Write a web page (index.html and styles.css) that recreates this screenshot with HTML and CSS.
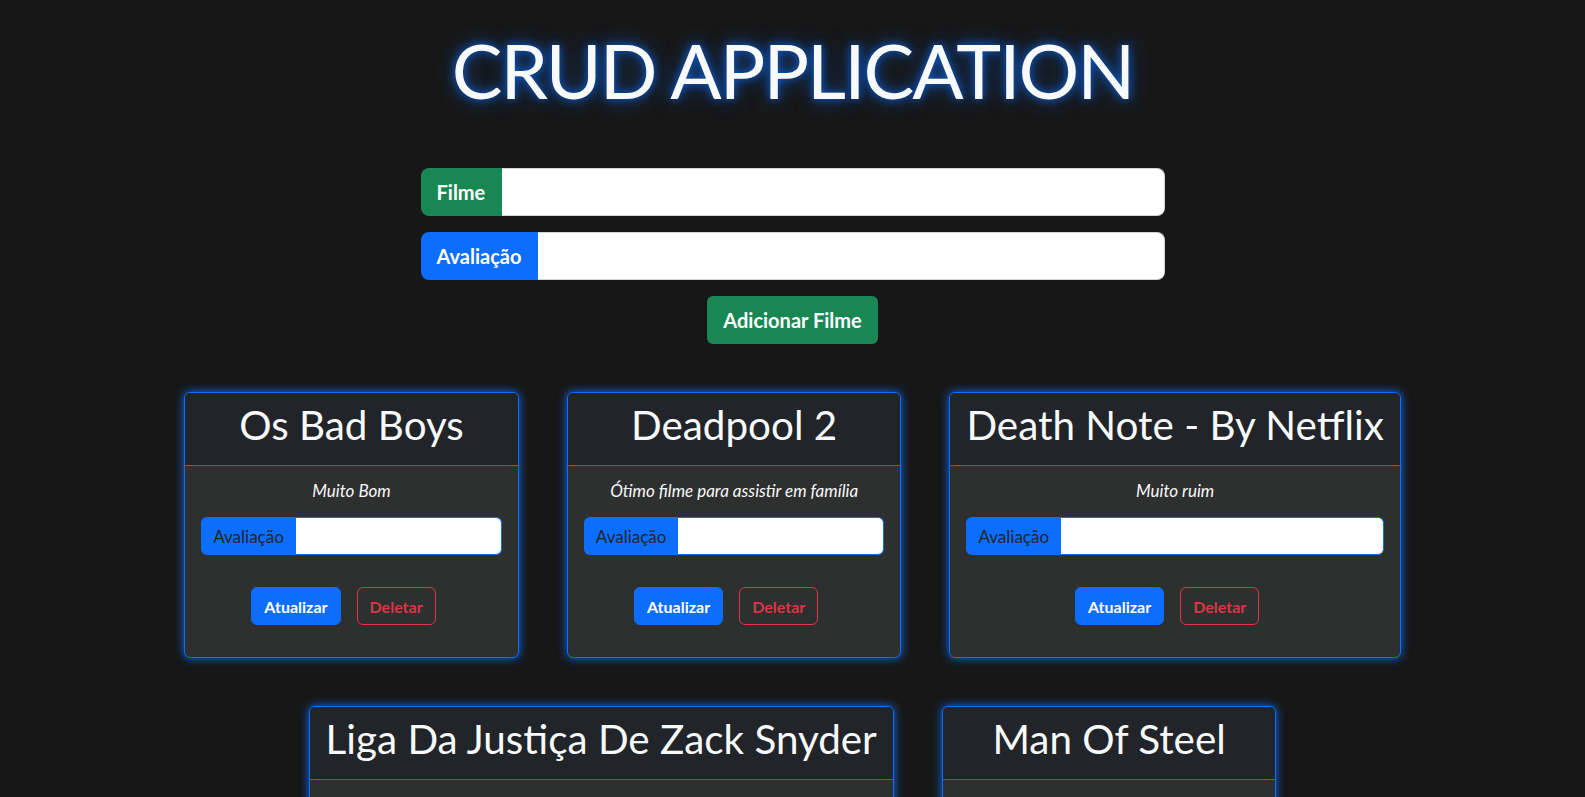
FILE: index.html
```html
<!DOCTYPE html>
<html lang="pt-BR">
<head>
<meta charset="utf-8">
<title>CRUD Application</title>
<link rel="stylesheet" href="styles.css">
</head>
<body>
<div class="app">
  <h1 class="title">CRUD APPLICATION</h1>
  <div class="form">
    <div class="igroup igroup-lg">
      <span class="ilabel ilabel-lg green">Filme</span>
      <input class="field field-lg" type="text">
    </div>
    <div class="igroup igroup-lg">
      <span class="ilabel ilabel-lg blue">Avaliação</span>
      <input class="field field-lg" type="text">
    </div>
    <button class="btn-add">Adicionar Filme</button>
  </div>

  <div class="cards">
    <div class="card">
      <div class="card-header"><h2 class="card-title">Os Bad Boys</h2></div>
      <div class="card-body">
        <p class="review">Muito Bom</p>
        <div class="igroup igroup-sm">
          <span class="ilabel ilabel-sm">Avaliação</span>
          <input class="field field-sm" type="text">
        </div>
        <div class="actions">
          <button class="btn btn-primary">Atualizar</button>
          <button class="btn btn-danger">Deletar</button>
        </div>
      </div>
    </div>
    <div class="card">
      <div class="card-header"><h2 class="card-title">Deadpool 2</h2></div>
      <div class="card-body">
        <p class="review">Ótimo filme para assistir em família</p>
        <div class="igroup igroup-sm">
          <span class="ilabel ilabel-sm">Avaliação</span>
          <input class="field field-sm" type="text">
        </div>
        <div class="actions">
          <button class="btn btn-primary">Atualizar</button>
          <button class="btn btn-danger">Deletar</button>
        </div>
      </div>
    </div>
    <div class="card">
      <div class="card-header"><h2 class="card-title">Death Note - By Netflix</h2></div>
      <div class="card-body">
        <p class="review">Muito ruim</p>
        <div class="igroup igroup-sm">
          <span class="ilabel ilabel-sm">Avaliação</span>
          <input class="field field-sm" type="text">
        </div>
        <div class="actions">
          <button class="btn btn-primary">Atualizar</button>
          <button class="btn btn-danger">Deletar</button>
        </div>
      </div>
    </div>
    <div class="card">
      <div class="card-header"><h2 class="card-title">Liga Da Justiça De Zack Snyder</h2></div>
      <div class="card-body">
        <p class="review">Excelente</p>
        <div class="igroup igroup-sm">
          <span class="ilabel ilabel-sm">Avaliação</span>
          <input class="field field-sm" type="text">
        </div>
        <div class="actions">
          <button class="btn btn-primary">Atualizar</button>
          <button class="btn btn-danger">Deletar</button>
        </div>
      </div>
    </div>
    <div class="card">
      <div class="card-header"><h2 class="card-title">Man Of Steel</h2></div>
      <div class="card-body">
        <p class="review">Muito Bom</p>
        <div class="igroup igroup-sm">
          <span class="ilabel ilabel-sm">Avaliação</span>
          <input class="field field-sm" type="text">
        </div>
        <div class="actions">
          <button class="btn btn-primary">Atualizar</button>
          <button class="btn btn-danger">Deletar</button>
        </div>
      </div>
    </div>
  </div>
</div>
</body>
</html>
```

FILE: styles.css
```css
* { box-sizing: border-box; }

body {
  margin: 0;
  background: #171717;
  color: #f8f9fa;
  font-family: "Lato", "Open Sans", sans-serif;
}

.title {
  margin: 22px 0 0;
  font-size: 76px;
  line-height: 96px;
  letter-spacing: -2px;
  font-weight: 400;
  text-align: center;
  color: #f8f9fa;
  text-shadow: 0 0 8px rgba(13, 110, 253, 0.8), 0 0 20px rgba(13, 110, 253, 0.6);
}

.form {
  width: 744px;
  margin: 50px auto 0;
  display: flex;
  flex-direction: column;
  align-items: center;
  gap: 16px;
}

.igroup {
  display: flex;
  width: 100%;
}

.igroup-lg { height: 48px; }
.igroup-sm { height: 38px; }

.ilabel {
  display: flex;
  align-items: center;
  white-space: nowrap;
}

.ilabel-lg {
  padding: 0 16px;
  font-size: 20px;
  font-weight: 700;
  color: #fff;
  border-radius: 8px 0 0 8px;
}

.ilabel-lg.green { padding: 0 17px 0 16px; }

.green { background: #198754; }
.blue { background: #0d6efd; }

.field {
  flex: 1;
  min-width: 0;
  background: #fff;
  outline: none;
  font: inherit;
}

.field-lg {
  border: 1px solid #ced4da;
  border-left: 0;
  border-radius: 0 8px 8px 0;
}

.btn-add {
  height: 48px;
  padding: 0 16px;
  font-family: inherit;
  font-size: 20px;
  font-weight: 700;
  color: #fff;
  background: #198754;
  border: 0;
  border-radius: 6px;
}

.cards {
  display: flex;
  flex-wrap: wrap;
  justify-content: center;
  padding-top: 24px;
}

.card {
  margin: 24px;
  min-width: 334px;
  border: 1px solid #0d6efd;
  border-radius: 6px;
  background: #2e2f2f;
  box-shadow: 0 0 10px #0d6efd;
  overflow: hidden;
}

.card-header {
  padding: 8px 16px;
  background: #212529;
  border-bottom: 1px solid #0d6efd;
  text-align: center;
}

.card-title {
  margin: 0 0 8px;
  font-size: 40.4px;
  line-height: 48px;
  font-weight: 400;
  white-space: nowrap;
  color: #f8f9fa;
}

.card-body {
  padding: 14px 16px 32px;
}

.review {
  margin: 0 0 15px;
  font-size: 17px;
  line-height: 22px;
  font-style: italic;
  text-align: center;
  color: #f8f9fa;
}

.ilabel-sm {
  padding: 0 12px;
  font-size: 17px;
  color: #212529;
  background: #0d6efd;
  border-radius: 6px 0 0 6px;
}

.field-sm {
  border: 1px solid #0d6efd;
  border-left: 0;
  border-radius: 0 6px 6px 0;
}

.actions {
  display: flex;
  justify-content: center;
  margin-top: 32px;
}

.btn {
  height: 38px;
  margin-right: 16px;
  padding: 0 12px;
  font-family: inherit;
  font-size: 16px;
  font-weight: 700;
  border-radius: 6px;
  cursor: pointer;
}

.btn-primary {
  color: #fff;
  background: #0d6efd;
  border: 1px solid #0d6efd;
}

.btn-danger {
  color: #dc3545;
  background: transparent;
  border: 1px solid #dc3545;
}
```
